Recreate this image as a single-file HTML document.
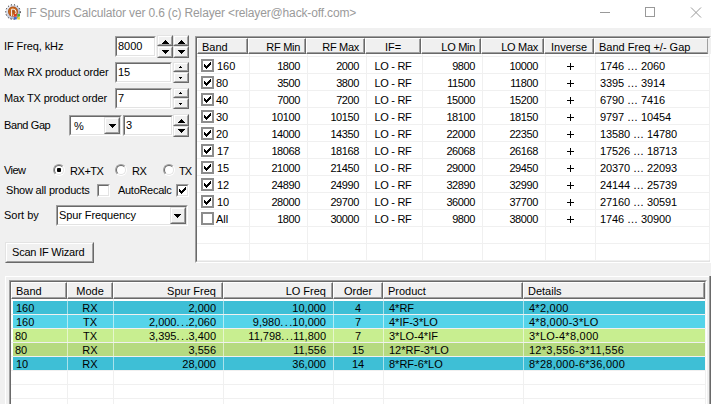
<!DOCTYPE html><html><head><meta charset="utf-8"><style>
*{box-sizing:border-box}
html{background:#f0f0f0}
body{margin:0;width:711px;height:404px;overflow:hidden;background:#f0f0f0;position:relative;font:11px "Liberation Sans",sans-serif;color:#000}
.a{position:absolute}
.t{position:absolute;line-height:13px;white-space:nowrap}
i{font-style:normal;letter-spacing:1.4px;margin-right:-1.4px}
.sk{border-style:solid;border-width:1px;border-color:#a0a0a0 #fff #fff #a0a0a0}
.ski{position:absolute;left:0;top:0;right:0;bottom:0;border-style:solid;border-width:1px;border-color:#696969 #e3e3e3 #e3e3e3 #696969}
.rs{border-style:solid;border-width:1px;border-color:#e3e3e3 #696969 #696969 #e3e3e3}
.rsi{position:absolute;left:0;top:0;right:0;bottom:0;border-style:solid;border-width:1px;border-color:#fff #a0a0a0 #a0a0a0 #fff}
.hd{position:absolute;background:#f0f0f0;border-style:solid;border-width:1px 1px 1px 1px;border-color:#fff #696969 #696969 #fff}
.hdi{position:absolute;left:0;top:0;right:0;bottom:0;border-style:solid;border-width:0 1px 1px 0;border-color:#a0a0a0}
</style></head><body>
<div class="a" style="left:0px;top:0px;width:711px;height:28px;background:#fff"></div>
<svg class="a" style="left:5px;top:4px" width="16" height="16" viewBox="0 0 16 16">
<defs><linearGradient id="rg" x1="0" y1="0" x2="1" y2="1"><stop offset="0" stop-color="#f4f6fa"/><stop offset="0.55" stop-color="#c4cadb"/><stop offset="1" stop-color="#8890a8"/></linearGradient>
<radialGradient id="og" cx="0.5" cy="0.5" r="0.55"><stop offset="0" stop-color="#a84810"/><stop offset="0.6" stop-color="#d07020"/><stop offset="1" stop-color="#9a4010"/></radialGradient></defs>
<circle cx="8" cy="8" r="7.3" fill="url(#rg)"/>
<circle cx="8" cy="8" r="7.3" fill="none" stroke="#111" stroke-width="1" stroke-dasharray="1.1 2.1"/>
<circle cx="8" cy="7.6" r="5" fill="url(#og)"/>
<path d="M6.6 12V5.2h1.6a2.9 3.1 0 0 1 0 6.2" stroke="#f4f4f4" stroke-width="1" fill="none"/>
<rect x="9" y="10" width="2.6" height="2.6" fill="#e03a20"/><rect x="12.3" y="10" width="2.6" height="2.6" fill="#48b038"/>
<rect x="9" y="13.1" width="2.6" height="2.4" fill="#3a68d0"/><rect x="12.3" y="13.1" width="2.6" height="2.4" fill="#e8d030"/>
</svg>
<div class="t" style="left:26px;top:5px;font-size:12px;line-height:16px;letter-spacing:-0.15px;color:#9a9a9a">IF Spurs Calculator ver 0.6 (c) Relayer &lt;relayer@hack-off.com&gt;</div>
<div class="a" style="left:600px;top:12px;width:10px;height:1px;background:#999"></div>
<div class="a" style="left:645px;top:7px;width:10px;height:10px;border:1px solid #999"></div>
<svg class="a" style="left:690px;top:7px" width="12" height="12"><path d="M1 0.5L11 10.5M11 0.5L1 10.5" stroke="#999" stroke-width="1"/></svg>
<div class="t" style="left:4px;top:40px;letter-spacing:-0.1px">IF Freq, kHz</div>
<div class="a sk" style="left:115px;top:36px;width:41px;height:21px;background:#fff"><div class="ski"></div></div>
<div class="t" style="left:118px;top:40px;">8000</div>
<div class="a rs" style="left:157px;top:35px;width:16px;height:11px;background:#f0f0f0"><div class="rsi"></div></div>
<div class="a rs" style="left:157px;top:46px;width:16px;height:12px;background:#f0f0f0"><div class="rsi"></div></div>
<div class="a" style="left:165px;top:40px;width:1px;height:1px;background:#000"></div><div class="a" style="left:164px;top:41px;width:3px;height:1px;background:#000"></div><div class="a" style="left:163px;top:42px;width:5px;height:1px;background:#000"></div><div class="a" style="left:162px;top:43px;width:7px;height:1px;background:#000"></div>
<div class="a" style="left:162px;top:50px;width:7px;height:1px;background:#000"></div><div class="a" style="left:163px;top:51px;width:5px;height:1px;background:#000"></div><div class="a" style="left:164px;top:52px;width:3px;height:1px;background:#000"></div><div class="a" style="left:165px;top:53px;width:1px;height:1px;background:#000"></div>
<div class="a rs" style="left:173px;top:35px;width:16px;height:11px;background:#f0f0f0"><div class="rsi"></div></div>
<div class="a rs" style="left:173px;top:46px;width:16px;height:12px;background:#f0f0f0"><div class="rsi"></div></div>
<div class="a" style="left:181px;top:40px;width:1px;height:1px;background:#000"></div><div class="a" style="left:180px;top:41px;width:3px;height:1px;background:#000"></div><div class="a" style="left:179px;top:42px;width:5px;height:1px;background:#000"></div><div class="a" style="left:178px;top:43px;width:7px;height:1px;background:#000"></div>
<div class="a" style="left:178px;top:50px;width:7px;height:1px;background:#000"></div><div class="a" style="left:179px;top:51px;width:5px;height:1px;background:#000"></div><div class="a" style="left:180px;top:52px;width:3px;height:1px;background:#000"></div><div class="a" style="left:181px;top:53px;width:1px;height:1px;background:#000"></div>
<div class="t" style="left:4px;top:66px;letter-spacing:-0.16px">Max RX product order</div>
<div class="a sk" style="left:115px;top:62px;width:57px;height:21px;background:#fff"><div class="ski"></div></div>
<div class="t" style="left:118px;top:66px;">15</div>
<div class="a rs" style="left:173px;top:62px;width:16px;height:10px;background:#f0f0f0"><div class="rsi"></div></div>
<div class="a rs" style="left:173px;top:72px;width:16px;height:11px;background:#f0f0f0"><div class="rsi"></div></div>
<div class="a" style="left:180px;top:66px;width:1px;height:1px;background:#000"></div><div class="a" style="left:179px;top:67px;width:3px;height:1px;background:#000"></div>
<div class="a" style="left:179px;top:77px;width:3px;height:1px;background:#000"></div><div class="a" style="left:180px;top:78px;width:1px;height:1px;background:#000"></div>
<div class="t" style="left:4px;top:92px;letter-spacing:-0.16px">Max TX product order</div>
<div class="a sk" style="left:115px;top:88px;width:57px;height:21px;background:#fff"><div class="ski"></div></div>
<div class="t" style="left:118px;top:92px;">7</div>
<div class="a rs" style="left:173px;top:88px;width:16px;height:10px;background:#f0f0f0"><div class="rsi"></div></div>
<div class="a rs" style="left:173px;top:98px;width:16px;height:11px;background:#f0f0f0"><div class="rsi"></div></div>
<div class="a" style="left:180px;top:92px;width:1px;height:1px;background:#000"></div><div class="a" style="left:179px;top:93px;width:3px;height:1px;background:#000"></div>
<div class="a" style="left:179px;top:103px;width:3px;height:1px;background:#000"></div><div class="a" style="left:180px;top:104px;width:1px;height:1px;background:#000"></div>
<div class="t" style="left:4px;top:119px;letter-spacing:-0.4px">Band Gap</div>
<div class="a sk" style="left:69px;top:115px;width:53px;height:21px;background:#fff"><div class="ski"></div></div>
<div class="t" style="left:74px;top:120px;">%</div>
<div class="a rs" style="left:104px;top:117px;width:16px;height:17px;background:#f0f0f0"><div class="rsi"></div></div>
<div class="a" style="left:109px;top:124px;width:7px;height:1px;background:#000"></div><div class="a" style="left:110px;top:125px;width:5px;height:1px;background:#000"></div><div class="a" style="left:111px;top:126px;width:3px;height:1px;background:#000"></div><div class="a" style="left:112px;top:127px;width:1px;height:1px;background:#000"></div>
<div class="a sk" style="left:123px;top:115px;width:50px;height:21px;background:#fff"><div class="ski"></div></div>
<div class="t" style="left:126px;top:119px;">3</div>
<div class="a rs" style="left:173px;top:114px;width:16px;height:12px;background:#f0f0f0"><div class="rsi"></div></div>
<div class="a rs" style="left:173px;top:126px;width:16px;height:11px;background:#f0f0f0"><div class="rsi"></div></div>
<div class="a" style="left:181px;top:119px;width:1px;height:1px;background:#000"></div><div class="a" style="left:180px;top:120px;width:3px;height:1px;background:#000"></div><div class="a" style="left:179px;top:121px;width:5px;height:1px;background:#000"></div><div class="a" style="left:178px;top:122px;width:7px;height:1px;background:#000"></div>
<div class="a" style="left:178px;top:129px;width:7px;height:1px;background:#000"></div><div class="a" style="left:179px;top:130px;width:5px;height:1px;background:#000"></div><div class="a" style="left:180px;top:131px;width:3px;height:1px;background:#000"></div><div class="a" style="left:181px;top:132px;width:1px;height:1px;background:#000"></div>
<div class="t" style="left:4px;top:164px;letter-spacing:-0.6px">View</div>
<div class="a" style="left:53px;top:164px;width:12px;height:12px;border-radius:50%;border:1px solid;border-color:#a0a0a0 #fff #fff #a0a0a0"><div class="a" style="left:0;top:0;width:10px;height:10px;border-radius:50%;border:1px solid;border-color:#696969 #e3e3e3 #e3e3e3 #696969;background:#fff"></div></div><div class="a" style="left:57px;top:168px;width:4px;height:4px;border-radius:1px;background:#000"></div>
<div class="t" style="left:70px;top:165px;letter-spacing:-0.45px">RX+TX</div>
<div class="a" style="left:115px;top:164px;width:12px;height:12px;border-radius:50%;border:1px solid;border-color:#a0a0a0 #fff #fff #a0a0a0"><div class="a" style="left:0;top:0;width:10px;height:10px;border-radius:50%;border:1px solid;border-color:#696969 #e3e3e3 #e3e3e3 #696969;background:#fff"></div></div>
<div class="t" style="left:132px;top:165px;letter-spacing:-0.5px">RX</div>
<div class="a" style="left:163px;top:164px;width:12px;height:12px;border-radius:50%;border:1px solid;border-color:#a0a0a0 #fff #fff #a0a0a0"><div class="a" style="left:0;top:0;width:10px;height:10px;border-radius:50%;border:1px solid;border-color:#696969 #e3e3e3 #e3e3e3 #696969;background:#fff"></div></div>
<div class="t" style="left:179px;top:165px;letter-spacing:-1px">TX</div>
<div class="t" style="left:6px;top:184px;letter-spacing:-0.19px">Show all products</div>
<div class="a sk" style="left:97px;top:184px;width:13px;height:13px;background:#fff"><div class="ski"></div></div>
<div class="t" style="left:118px;top:184px;letter-spacing:-0.29px">AutoRecalc</div>
<div class="a sk" style="left:176px;top:184px;width:13px;height:13px;background:#fff"><div class="ski"></div></div>
<svg class="a" style="left:179px;top:187px" width="7" height="7" shape-rendering="crispEdges"><path d="M6 0h1v1h-1zM5 1h1v1h-1zM6 1h1v1h-1zM0 2h1v1h-1zM4 2h1v1h-1zM5 2h1v1h-1zM6 2h1v1h-1zM0 3h1v1h-1zM1 3h1v1h-1zM3 3h1v1h-1zM4 3h1v1h-1zM5 3h1v1h-1zM0 4h1v1h-1zM1 4h1v1h-1zM2 4h1v1h-1zM3 4h1v1h-1zM4 4h1v1h-1zM1 5h1v1h-1zM2 5h1v1h-1zM3 5h1v1h-1zM2 6h1v1h-1z" fill="#000"/></svg>
<div class="t" style="left:4px;top:209px;">Sort by</div>
<div class="a sk" style="left:56px;top:205px;width:132px;height:21px;background:#fff"><div class="ski"></div></div>
<div class="t" style="left:59px;top:209px;letter-spacing:-0.1px">Spur Frequency</div>
<div class="a rs" style="left:170px;top:207px;width:16px;height:17px;background:#f0f0f0"><div class="rsi"></div></div>
<div class="a" style="left:174px;top:214px;width:7px;height:1px;background:#000"></div><div class="a" style="left:175px;top:215px;width:5px;height:1px;background:#000"></div><div class="a" style="left:176px;top:216px;width:3px;height:1px;background:#000"></div><div class="a" style="left:177px;top:217px;width:1px;height:1px;background:#000"></div>
<div class="a rs" style="left:5px;top:242px;width:89px;height:21px;background:#f0f0f0"><div class="rsi"></div></div>
<div class="t" style="left:12px;top:246px;letter-spacing:-0.2px">Scan IF Wizard</div>
<div class="a" style="left:195px;top:36px;width:516px;height:227px;background:#fff;border-style:solid;border-width:1px;border-color:#a0a0a0 #fff #fff #a0a0a0"></div>
<div class="a" style="left:196px;top:37px;width:514px;height:225px;border-style:solid;border-width:1px;border-color:#696969 #e3e3e3 #e3e3e3 #696969"></div>
<div class="a" style="left:249px;top:54px;width:1px;height:206px;background:#f0f0f0"></div>
<div class="a" style="left:307px;top:54px;width:1px;height:206px;background:#f0f0f0"></div>
<div class="a" style="left:366px;top:54px;width:1px;height:206px;background:#f0f0f0"></div>
<div class="a" style="left:422px;top:54px;width:1px;height:206px;background:#f0f0f0"></div>
<div class="a" style="left:482px;top:54px;width:1px;height:206px;background:#f0f0f0"></div>
<div class="a" style="left:545px;top:54px;width:1px;height:206px;background:#f0f0f0"></div>
<div class="a" style="left:595px;top:54px;width:1px;height:206px;background:#f0f0f0"></div>
<div class="a" style="left:709px;top:54px;width:1px;height:206px;background:#f0f0f0"></div>
<div class="a" style="left:197px;top:56px;width:512px;height:1px;background:#f0f0f0"></div>
<div class="a" style="left:197px;top:73px;width:512px;height:1px;background:#f0f0f0"></div>
<div class="a" style="left:197px;top:90px;width:512px;height:1px;background:#f0f0f0"></div>
<div class="a" style="left:197px;top:107px;width:512px;height:1px;background:#f0f0f0"></div>
<div class="a" style="left:197px;top:124px;width:512px;height:1px;background:#f0f0f0"></div>
<div class="a" style="left:197px;top:141px;width:512px;height:1px;background:#f0f0f0"></div>
<div class="a" style="left:197px;top:158px;width:512px;height:1px;background:#f0f0f0"></div>
<div class="a" style="left:197px;top:175px;width:512px;height:1px;background:#f0f0f0"></div>
<div class="a" style="left:197px;top:192px;width:512px;height:1px;background:#f0f0f0"></div>
<div class="a" style="left:197px;top:209px;width:512px;height:1px;background:#f0f0f0"></div>
<div class="a" style="left:197px;top:226px;width:512px;height:1px;background:#f0f0f0"></div>
<div class="a" style="left:197px;top:243px;width:512px;height:1px;background:#f0f0f0"></div>
<div class="a" style="left:197px;top:260px;width:512px;height:1px;background:#f0f0f0"></div>
<div class="a" style="left:197px;top:38px;width:514px;height:16px;background:#f0f0f0"></div>
<div class="hd" style="left:197px;top:38px;width:51px;height:16px"><div class="hdi"></div></div>
<div class="hd" style="left:248px;top:38px;width:58px;height:16px"><div class="hdi"></div></div>
<div class="hd" style="left:306px;top:38px;width:59px;height:16px"><div class="hdi"></div></div>
<div class="hd" style="left:365px;top:38px;width:56px;height:16px"><div class="hdi"></div></div>
<div class="hd" style="left:421px;top:38px;width:60px;height:16px"><div class="hdi"></div></div>
<div class="hd" style="left:481px;top:38px;width:63px;height:16px"><div class="hdi"></div></div>
<div class="hd" style="left:544px;top:38px;width:50px;height:16px"><div class="hdi"></div></div>
<div class="hd" style="left:594px;top:38px;width:114px;height:16px;border-right-color:#a0a0a0"><div class="hdi" style="border-right-width:0"></div></div>
<div class="t" style="left:202px;top:41px;">Band</div>
<div class="t" style="left:248px;width:52px;top:41px;text-align:right"><span style="letter-spacing:-0.3px">RF Min</span></div>
<div class="t" style="left:306px;width:53px;top:41px;text-align:right"><span style="letter-spacing:-0.3px">RF Max</span></div>
<div class="t" style="left:365px;width:56px;top:41px;text-align:center">IF=</div>
<div class="t" style="left:421px;width:54px;top:41px;text-align:right"><span style="letter-spacing:-0.3px">LO Min</span></div>
<div class="t" style="left:481px;width:57px;top:41px;text-align:right"><span style="letter-spacing:-0.3px">LO Max</span></div>
<div class="t" style="left:544px;width:50px;top:41px;text-align:center">Inverse</div>
<div class="t" style="left:599px;top:41px;">Band Freq +/- Gap</div>
<div class="a" style="left:201px;top:59px;width:13px;height:13px;border:2px solid #8c8c8c;background:#fff"></div>
<svg class="a" style="left:204px;top:62px" width="7" height="7" shape-rendering="crispEdges"><path d="M6 0h1v1h-1zM5 1h1v1h-1zM6 1h1v1h-1zM0 2h1v1h-1zM4 2h1v1h-1zM5 2h1v1h-1zM6 2h1v1h-1zM0 3h1v1h-1zM1 3h1v1h-1zM3 3h1v1h-1zM4 3h1v1h-1zM5 3h1v1h-1zM0 4h1v1h-1zM1 4h1v1h-1zM2 4h1v1h-1zM3 4h1v1h-1zM4 4h1v1h-1zM1 5h1v1h-1zM2 5h1v1h-1zM3 5h1v1h-1zM2 6h1v1h-1z" fill="#000"/></svg>
<div class="t" style="left:217px;top:60px;">160</div>
<div class="t" style="left:248px;width:52px;top:60px;text-align:right"><span style="letter-spacing:-0.4px">1800</span></div>
<div class="t" style="left:306px;width:53px;top:60px;text-align:right"><span style="letter-spacing:-0.4px">2000</span></div>
<div class="t" style="left:365px;width:56px;top:60px;text-align:center"><span style="letter-spacing:-0.3px">LO - RF</span></div>
<div class="t" style="left:421px;width:54px;top:60px;text-align:right"><span style="letter-spacing:-0.4px">9800</span></div>
<div class="t" style="left:481px;width:57px;top:60px;text-align:right"><span style="letter-spacing:-0.4px">10000</span></div>
<div class="a" style="left:567px;top:66px;width:7px;height:1px;background:#000"></div>
<div class="a" style="left:570px;top:63px;width:1px;height:7px;background:#000"></div>
<div class="t" style="left:600px;top:60px;"><span style="letter-spacing:-0.1px">1746 … 2060</span></div>
<div class="a" style="left:201px;top:76px;width:13px;height:13px;border:2px solid #8c8c8c;background:#fff"></div>
<svg class="a" style="left:204px;top:79px" width="7" height="7" shape-rendering="crispEdges"><path d="M6 0h1v1h-1zM5 1h1v1h-1zM6 1h1v1h-1zM0 2h1v1h-1zM4 2h1v1h-1zM5 2h1v1h-1zM6 2h1v1h-1zM0 3h1v1h-1zM1 3h1v1h-1zM3 3h1v1h-1zM4 3h1v1h-1zM5 3h1v1h-1zM0 4h1v1h-1zM1 4h1v1h-1zM2 4h1v1h-1zM3 4h1v1h-1zM4 4h1v1h-1zM1 5h1v1h-1zM2 5h1v1h-1zM3 5h1v1h-1zM2 6h1v1h-1z" fill="#000"/></svg>
<div class="t" style="left:216px;top:77px;">80</div>
<div class="t" style="left:248px;width:52px;top:77px;text-align:right"><span style="letter-spacing:-0.4px">3500</span></div>
<div class="t" style="left:306px;width:53px;top:77px;text-align:right"><span style="letter-spacing:-0.4px">3800</span></div>
<div class="t" style="left:365px;width:56px;top:77px;text-align:center"><span style="letter-spacing:-0.3px">LO - RF</span></div>
<div class="t" style="left:421px;width:54px;top:77px;text-align:right"><span style="letter-spacing:-0.4px">11500</span></div>
<div class="t" style="left:481px;width:57px;top:77px;text-align:right"><span style="letter-spacing:-0.4px">11800</span></div>
<div class="a" style="left:567px;top:83px;width:7px;height:1px;background:#000"></div>
<div class="a" style="left:570px;top:80px;width:1px;height:7px;background:#000"></div>
<div class="t" style="left:600px;top:77px;"><span style="letter-spacing:-0.1px">3395 … 3914</span></div>
<div class="a" style="left:201px;top:93px;width:13px;height:13px;border:2px solid #8c8c8c;background:#fff"></div>
<svg class="a" style="left:204px;top:96px" width="7" height="7" shape-rendering="crispEdges"><path d="M6 0h1v1h-1zM5 1h1v1h-1zM6 1h1v1h-1zM0 2h1v1h-1zM4 2h1v1h-1zM5 2h1v1h-1zM6 2h1v1h-1zM0 3h1v1h-1zM1 3h1v1h-1zM3 3h1v1h-1zM4 3h1v1h-1zM5 3h1v1h-1zM0 4h1v1h-1zM1 4h1v1h-1zM2 4h1v1h-1zM3 4h1v1h-1zM4 4h1v1h-1zM1 5h1v1h-1zM2 5h1v1h-1zM3 5h1v1h-1zM2 6h1v1h-1z" fill="#000"/></svg>
<div class="t" style="left:216px;top:94px;">40</div>
<div class="t" style="left:248px;width:52px;top:94px;text-align:right"><span style="letter-spacing:-0.4px">7000</span></div>
<div class="t" style="left:306px;width:53px;top:94px;text-align:right"><span style="letter-spacing:-0.4px">7200</span></div>
<div class="t" style="left:365px;width:56px;top:94px;text-align:center"><span style="letter-spacing:-0.3px">LO - RF</span></div>
<div class="t" style="left:421px;width:54px;top:94px;text-align:right"><span style="letter-spacing:-0.4px">15000</span></div>
<div class="t" style="left:481px;width:57px;top:94px;text-align:right"><span style="letter-spacing:-0.4px">15200</span></div>
<div class="a" style="left:567px;top:100px;width:7px;height:1px;background:#000"></div>
<div class="a" style="left:570px;top:97px;width:1px;height:7px;background:#000"></div>
<div class="t" style="left:600px;top:94px;"><span style="letter-spacing:-0.1px">6790 … 7416</span></div>
<div class="a" style="left:201px;top:110px;width:13px;height:13px;border:2px solid #8c8c8c;background:#fff"></div>
<svg class="a" style="left:204px;top:113px" width="7" height="7" shape-rendering="crispEdges"><path d="M6 0h1v1h-1zM5 1h1v1h-1zM6 1h1v1h-1zM0 2h1v1h-1zM4 2h1v1h-1zM5 2h1v1h-1zM6 2h1v1h-1zM0 3h1v1h-1zM1 3h1v1h-1zM3 3h1v1h-1zM4 3h1v1h-1zM5 3h1v1h-1zM0 4h1v1h-1zM1 4h1v1h-1zM2 4h1v1h-1zM3 4h1v1h-1zM4 4h1v1h-1zM1 5h1v1h-1zM2 5h1v1h-1zM3 5h1v1h-1zM2 6h1v1h-1z" fill="#000"/></svg>
<div class="t" style="left:216px;top:111px;">30</div>
<div class="t" style="left:248px;width:52px;top:111px;text-align:right"><span style="letter-spacing:-0.4px">10100</span></div>
<div class="t" style="left:306px;width:53px;top:111px;text-align:right"><span style="letter-spacing:-0.4px">10150</span></div>
<div class="t" style="left:365px;width:56px;top:111px;text-align:center"><span style="letter-spacing:-0.3px">LO - RF</span></div>
<div class="t" style="left:421px;width:54px;top:111px;text-align:right"><span style="letter-spacing:-0.4px">18100</span></div>
<div class="t" style="left:481px;width:57px;top:111px;text-align:right"><span style="letter-spacing:-0.4px">18150</span></div>
<div class="a" style="left:567px;top:117px;width:7px;height:1px;background:#000"></div>
<div class="a" style="left:570px;top:114px;width:1px;height:7px;background:#000"></div>
<div class="t" style="left:600px;top:111px;"><span style="letter-spacing:-0.1px">9797 … 10454</span></div>
<div class="a" style="left:201px;top:127px;width:13px;height:13px;border:2px solid #8c8c8c;background:#fff"></div>
<svg class="a" style="left:204px;top:130px" width="7" height="7" shape-rendering="crispEdges"><path d="M6 0h1v1h-1zM5 1h1v1h-1zM6 1h1v1h-1zM0 2h1v1h-1zM4 2h1v1h-1zM5 2h1v1h-1zM6 2h1v1h-1zM0 3h1v1h-1zM1 3h1v1h-1zM3 3h1v1h-1zM4 3h1v1h-1zM5 3h1v1h-1zM0 4h1v1h-1zM1 4h1v1h-1zM2 4h1v1h-1zM3 4h1v1h-1zM4 4h1v1h-1zM1 5h1v1h-1zM2 5h1v1h-1zM3 5h1v1h-1zM2 6h1v1h-1z" fill="#000"/></svg>
<div class="t" style="left:216px;top:128px;">20</div>
<div class="t" style="left:248px;width:52px;top:128px;text-align:right"><span style="letter-spacing:-0.4px">14000</span></div>
<div class="t" style="left:306px;width:53px;top:128px;text-align:right"><span style="letter-spacing:-0.4px">14350</span></div>
<div class="t" style="left:365px;width:56px;top:128px;text-align:center"><span style="letter-spacing:-0.3px">LO - RF</span></div>
<div class="t" style="left:421px;width:54px;top:128px;text-align:right"><span style="letter-spacing:-0.4px">22000</span></div>
<div class="t" style="left:481px;width:57px;top:128px;text-align:right"><span style="letter-spacing:-0.4px">22350</span></div>
<div class="a" style="left:567px;top:134px;width:7px;height:1px;background:#000"></div>
<div class="a" style="left:570px;top:131px;width:1px;height:7px;background:#000"></div>
<div class="t" style="left:600px;top:128px;"><span style="letter-spacing:-0.1px">13580 … 14780</span></div>
<div class="a" style="left:201px;top:144px;width:13px;height:13px;border:2px solid #8c8c8c;background:#fff"></div>
<svg class="a" style="left:204px;top:147px" width="7" height="7" shape-rendering="crispEdges"><path d="M6 0h1v1h-1zM5 1h1v1h-1zM6 1h1v1h-1zM0 2h1v1h-1zM4 2h1v1h-1zM5 2h1v1h-1zM6 2h1v1h-1zM0 3h1v1h-1zM1 3h1v1h-1zM3 3h1v1h-1zM4 3h1v1h-1zM5 3h1v1h-1zM0 4h1v1h-1zM1 4h1v1h-1zM2 4h1v1h-1zM3 4h1v1h-1zM4 4h1v1h-1zM1 5h1v1h-1zM2 5h1v1h-1zM3 5h1v1h-1zM2 6h1v1h-1z" fill="#000"/></svg>
<div class="t" style="left:217px;top:145px;">17</div>
<div class="t" style="left:248px;width:52px;top:145px;text-align:right"><span style="letter-spacing:-0.4px">18068</span></div>
<div class="t" style="left:306px;width:53px;top:145px;text-align:right"><span style="letter-spacing:-0.4px">18168</span></div>
<div class="t" style="left:365px;width:56px;top:145px;text-align:center"><span style="letter-spacing:-0.3px">LO - RF</span></div>
<div class="t" style="left:421px;width:54px;top:145px;text-align:right"><span style="letter-spacing:-0.4px">26068</span></div>
<div class="t" style="left:481px;width:57px;top:145px;text-align:right"><span style="letter-spacing:-0.4px">26168</span></div>
<div class="a" style="left:567px;top:151px;width:7px;height:1px;background:#000"></div>
<div class="a" style="left:570px;top:148px;width:1px;height:7px;background:#000"></div>
<div class="t" style="left:600px;top:145px;"><span style="letter-spacing:-0.1px">17526 … 18713</span></div>
<div class="a" style="left:201px;top:161px;width:13px;height:13px;border:2px solid #8c8c8c;background:#fff"></div>
<svg class="a" style="left:204px;top:164px" width="7" height="7" shape-rendering="crispEdges"><path d="M6 0h1v1h-1zM5 1h1v1h-1zM6 1h1v1h-1zM0 2h1v1h-1zM4 2h1v1h-1zM5 2h1v1h-1zM6 2h1v1h-1zM0 3h1v1h-1zM1 3h1v1h-1zM3 3h1v1h-1zM4 3h1v1h-1zM5 3h1v1h-1zM0 4h1v1h-1zM1 4h1v1h-1zM2 4h1v1h-1zM3 4h1v1h-1zM4 4h1v1h-1zM1 5h1v1h-1zM2 5h1v1h-1zM3 5h1v1h-1zM2 6h1v1h-1z" fill="#000"/></svg>
<div class="t" style="left:217px;top:162px;">15</div>
<div class="t" style="left:248px;width:52px;top:162px;text-align:right"><span style="letter-spacing:-0.4px">21000</span></div>
<div class="t" style="left:306px;width:53px;top:162px;text-align:right"><span style="letter-spacing:-0.4px">21450</span></div>
<div class="t" style="left:365px;width:56px;top:162px;text-align:center"><span style="letter-spacing:-0.3px">LO - RF</span></div>
<div class="t" style="left:421px;width:54px;top:162px;text-align:right"><span style="letter-spacing:-0.4px">29000</span></div>
<div class="t" style="left:481px;width:57px;top:162px;text-align:right"><span style="letter-spacing:-0.4px">29450</span></div>
<div class="a" style="left:567px;top:168px;width:7px;height:1px;background:#000"></div>
<div class="a" style="left:570px;top:165px;width:1px;height:7px;background:#000"></div>
<div class="t" style="left:600px;top:162px;"><span style="letter-spacing:-0.1px">20370 … 22093</span></div>
<div class="a" style="left:201px;top:178px;width:13px;height:13px;border:2px solid #8c8c8c;background:#fff"></div>
<svg class="a" style="left:204px;top:181px" width="7" height="7" shape-rendering="crispEdges"><path d="M6 0h1v1h-1zM5 1h1v1h-1zM6 1h1v1h-1zM0 2h1v1h-1zM4 2h1v1h-1zM5 2h1v1h-1zM6 2h1v1h-1zM0 3h1v1h-1zM1 3h1v1h-1zM3 3h1v1h-1zM4 3h1v1h-1zM5 3h1v1h-1zM0 4h1v1h-1zM1 4h1v1h-1zM2 4h1v1h-1zM3 4h1v1h-1zM4 4h1v1h-1zM1 5h1v1h-1zM2 5h1v1h-1zM3 5h1v1h-1zM2 6h1v1h-1z" fill="#000"/></svg>
<div class="t" style="left:217px;top:179px;">12</div>
<div class="t" style="left:248px;width:52px;top:179px;text-align:right"><span style="letter-spacing:-0.4px">24890</span></div>
<div class="t" style="left:306px;width:53px;top:179px;text-align:right"><span style="letter-spacing:-0.4px">24990</span></div>
<div class="t" style="left:365px;width:56px;top:179px;text-align:center"><span style="letter-spacing:-0.3px">LO - RF</span></div>
<div class="t" style="left:421px;width:54px;top:179px;text-align:right"><span style="letter-spacing:-0.4px">32890</span></div>
<div class="t" style="left:481px;width:57px;top:179px;text-align:right"><span style="letter-spacing:-0.4px">32990</span></div>
<div class="a" style="left:567px;top:185px;width:7px;height:1px;background:#000"></div>
<div class="a" style="left:570px;top:182px;width:1px;height:7px;background:#000"></div>
<div class="t" style="left:600px;top:179px;"><span style="letter-spacing:-0.1px">24144 … 25739</span></div>
<div class="a" style="left:201px;top:195px;width:13px;height:13px;border:2px solid #8c8c8c;background:#fff"></div>
<svg class="a" style="left:204px;top:198px" width="7" height="7" shape-rendering="crispEdges"><path d="M6 0h1v1h-1zM5 1h1v1h-1zM6 1h1v1h-1zM0 2h1v1h-1zM4 2h1v1h-1zM5 2h1v1h-1zM6 2h1v1h-1zM0 3h1v1h-1zM1 3h1v1h-1zM3 3h1v1h-1zM4 3h1v1h-1zM5 3h1v1h-1zM0 4h1v1h-1zM1 4h1v1h-1zM2 4h1v1h-1zM3 4h1v1h-1zM4 4h1v1h-1zM1 5h1v1h-1zM2 5h1v1h-1zM3 5h1v1h-1zM2 6h1v1h-1z" fill="#000"/></svg>
<div class="t" style="left:217px;top:196px;">10</div>
<div class="t" style="left:248px;width:52px;top:196px;text-align:right"><span style="letter-spacing:-0.4px">28000</span></div>
<div class="t" style="left:306px;width:53px;top:196px;text-align:right"><span style="letter-spacing:-0.4px">29700</span></div>
<div class="t" style="left:365px;width:56px;top:196px;text-align:center"><span style="letter-spacing:-0.3px">LO - RF</span></div>
<div class="t" style="left:421px;width:54px;top:196px;text-align:right"><span style="letter-spacing:-0.4px">36000</span></div>
<div class="t" style="left:481px;width:57px;top:196px;text-align:right"><span style="letter-spacing:-0.4px">37700</span></div>
<div class="a" style="left:567px;top:202px;width:7px;height:1px;background:#000"></div>
<div class="a" style="left:570px;top:199px;width:1px;height:7px;background:#000"></div>
<div class="t" style="left:600px;top:196px;"><span style="letter-spacing:-0.1px">27160 … 30591</span></div>
<div class="a" style="left:201px;top:212px;width:13px;height:13px;border:2px solid #8c8c8c;background:#fff"></div>
<div class="t" style="left:216px;top:213px;">All</div>
<div class="t" style="left:248px;width:52px;top:213px;text-align:right"><span style="letter-spacing:-0.4px">1800</span></div>
<div class="t" style="left:306px;width:53px;top:213px;text-align:right"><span style="letter-spacing:-0.4px">30000</span></div>
<div class="t" style="left:365px;width:56px;top:213px;text-align:center"><span style="letter-spacing:-0.3px">LO - RF</span></div>
<div class="t" style="left:421px;width:54px;top:213px;text-align:right"><span style="letter-spacing:-0.4px">9800</span></div>
<div class="t" style="left:481px;width:57px;top:213px;text-align:right"><span style="letter-spacing:-0.4px">38000</span></div>
<div class="a" style="left:567px;top:219px;width:7px;height:1px;background:#000"></div>
<div class="a" style="left:570px;top:216px;width:1px;height:7px;background:#000"></div>
<div class="t" style="left:600px;top:213px;"><span style="letter-spacing:-0.1px">1746 … 30900</span></div>
<div class="a" style="left:5px;top:276px;width:706px;height:128px;border-style:solid;border-width:1px 0 0 1px;border-color:#fff"></div>
<div class="a" style="left:9px;top:280px;width:698px;height:130px;background:#fff;border-style:solid;border-width:1px;border-color:#a0a0a0 #fff #fff #a0a0a0"></div>
<div class="a" style="left:10px;top:281px;width:696px;height:128px;border-style:solid;border-width:1px;border-color:#696969 #e3e3e3 #e3e3e3 #696969"></div>
<div class="a" style="left:11px;top:314px;width:695px;height:1px;background:#f0f0f0"></div>
<div class="a" style="left:11px;top:328px;width:695px;height:1px;background:#f0f0f0"></div>
<div class="a" style="left:11px;top:342px;width:695px;height:1px;background:#f0f0f0"></div>
<div class="a" style="left:11px;top:356px;width:695px;height:1px;background:#f0f0f0"></div>
<div class="a" style="left:11px;top:370px;width:695px;height:1px;background:#f0f0f0"></div>
<div class="a" style="left:11px;top:384px;width:695px;height:1px;background:#f0f0f0"></div>
<div class="a" style="left:11px;top:398px;width:695px;height:1px;background:#f0f0f0"></div>
<div class="a" style="left:67px;top:299px;width:1px;height:105px;background:#f0f0f0"></div>
<div class="a" style="left:113px;top:299px;width:1px;height:105px;background:#f0f0f0"></div>
<div class="a" style="left:223px;top:299px;width:1px;height:105px;background:#f0f0f0"></div>
<div class="a" style="left:333px;top:299px;width:1px;height:105px;background:#f0f0f0"></div>
<div class="a" style="left:383px;top:299px;width:1px;height:105px;background:#f0f0f0"></div>
<div class="a" style="left:523px;top:299px;width:1px;height:105px;background:#f0f0f0"></div>
<div class="a" style="left:705px;top:299px;width:1px;height:105px;background:#f0f0f0"></div>
<div class="a" style="left:13px;top:301px;width:692px;height:13px;background:#3ebfd6"></div>
<div class="a" style="left:67px;top:301px;width:1px;height:13px;background:rgba(255,255,255,0.55)"></div>
<div class="a" style="left:113px;top:301px;width:1px;height:13px;background:rgba(255,255,255,0.55)"></div>
<div class="a" style="left:223px;top:301px;width:1px;height:13px;background:rgba(255,255,255,0.55)"></div>
<div class="a" style="left:333px;top:301px;width:1px;height:13px;background:rgba(255,255,255,0.55)"></div>
<div class="a" style="left:383px;top:301px;width:1px;height:13px;background:rgba(255,255,255,0.55)"></div>
<div class="a" style="left:523px;top:301px;width:1px;height:13px;background:rgba(255,255,255,0.55)"></div>
<div class="a" style="left:705px;top:301px;width:1px;height:13px;background:rgba(255,255,255,0.55)"></div>
<div class="t" style="left:16px;top:302px;">160</div>
<div class="t" style="left:67px;width:46px;top:302px;text-align:center">RX</div>
<div class="t" style="left:113px;width:103px;top:302px;text-align:right">2,000</div>
<div class="t" style="left:223px;width:103px;top:302px;text-align:right">10,000</div>
<div class="t" style="left:333px;width:50px;top:302px;text-align:center">4</div>
<div class="t" style="left:389px;top:302px;">4*RF</div>
<div class="t" style="left:529px;top:302px;"><span style="letter-spacing:0.25px">4*2,000</span></div>
<div class="a" style="left:13px;top:315px;width:692px;height:13px;background:#55d4ea"></div>
<div class="a" style="left:67px;top:315px;width:1px;height:13px;background:rgba(255,255,255,0.55)"></div>
<div class="a" style="left:113px;top:315px;width:1px;height:13px;background:rgba(255,255,255,0.55)"></div>
<div class="a" style="left:223px;top:315px;width:1px;height:13px;background:rgba(255,255,255,0.55)"></div>
<div class="a" style="left:333px;top:315px;width:1px;height:13px;background:rgba(255,255,255,0.55)"></div>
<div class="a" style="left:383px;top:315px;width:1px;height:13px;background:rgba(255,255,255,0.55)"></div>
<div class="a" style="left:523px;top:315px;width:1px;height:13px;background:rgba(255,255,255,0.55)"></div>
<div class="a" style="left:705px;top:315px;width:1px;height:13px;background:rgba(255,255,255,0.55)"></div>
<div class="t" style="left:16px;top:316px;">160</div>
<div class="t" style="left:67px;width:46px;top:316px;text-align:center">TX</div>
<div class="t" style="left:113px;width:103px;top:316px;text-align:right">2,000<i>...</i>2,060</div>
<div class="t" style="left:223px;width:103px;top:316px;text-align:right">9,980<i>...</i>10,000</div>
<div class="t" style="left:333px;width:50px;top:316px;text-align:center">7</div>
<div class="t" style="left:389px;top:316px;">4*IF-3*LO</div>
<div class="t" style="left:529px;top:316px;"><span style="letter-spacing:0.25px">4*8,000-3*LO</span></div>
<div class="a" style="left:13px;top:329px;width:692px;height:13px;background:#c8ee90"></div>
<div class="a" style="left:67px;top:329px;width:1px;height:13px;background:rgba(255,255,255,0.55)"></div>
<div class="a" style="left:113px;top:329px;width:1px;height:13px;background:rgba(255,255,255,0.55)"></div>
<div class="a" style="left:223px;top:329px;width:1px;height:13px;background:rgba(255,255,255,0.55)"></div>
<div class="a" style="left:333px;top:329px;width:1px;height:13px;background:rgba(255,255,255,0.55)"></div>
<div class="a" style="left:383px;top:329px;width:1px;height:13px;background:rgba(255,255,255,0.55)"></div>
<div class="a" style="left:523px;top:329px;width:1px;height:13px;background:rgba(255,255,255,0.55)"></div>
<div class="a" style="left:705px;top:329px;width:1px;height:13px;background:rgba(255,255,255,0.55)"></div>
<div class="t" style="left:15px;top:330px;">80</div>
<div class="t" style="left:67px;width:46px;top:330px;text-align:center">TX</div>
<div class="t" style="left:113px;width:103px;top:330px;text-align:right">3,395<i>...</i>3,400</div>
<div class="t" style="left:223px;width:103px;top:330px;text-align:right">11,798<i>...</i>11,800</div>
<div class="t" style="left:333px;width:50px;top:330px;text-align:center">7</div>
<div class="t" style="left:389px;top:330px;">3*LO-4*IF</div>
<div class="t" style="left:529px;top:330px;"><span style="letter-spacing:0.25px">3*LO-4*8,000</span></div>
<div class="a" style="left:13px;top:343px;width:692px;height:13px;background:#b6da80"></div>
<div class="a" style="left:67px;top:343px;width:1px;height:13px;background:rgba(255,255,255,0.55)"></div>
<div class="a" style="left:113px;top:343px;width:1px;height:13px;background:rgba(255,255,255,0.55)"></div>
<div class="a" style="left:223px;top:343px;width:1px;height:13px;background:rgba(255,255,255,0.55)"></div>
<div class="a" style="left:333px;top:343px;width:1px;height:13px;background:rgba(255,255,255,0.55)"></div>
<div class="a" style="left:383px;top:343px;width:1px;height:13px;background:rgba(255,255,255,0.55)"></div>
<div class="a" style="left:523px;top:343px;width:1px;height:13px;background:rgba(255,255,255,0.55)"></div>
<div class="a" style="left:705px;top:343px;width:1px;height:13px;background:rgba(255,255,255,0.55)"></div>
<div class="t" style="left:15px;top:344px;">80</div>
<div class="t" style="left:67px;width:46px;top:344px;text-align:center">RX</div>
<div class="t" style="left:113px;width:103px;top:344px;text-align:right">3,556</div>
<div class="t" style="left:223px;width:103px;top:344px;text-align:right">11,556</div>
<div class="t" style="left:333px;width:50px;top:344px;text-align:center">15</div>
<div class="t" style="left:389px;top:344px;">12*RF-3*LO</div>
<div class="t" style="left:529px;top:344px;"><span style="letter-spacing:0.25px">12*3,556-3*11,556</span></div>
<div class="a" style="left:13px;top:357px;width:692px;height:13px;background:#3ebfd6"></div>
<div class="a" style="left:67px;top:357px;width:1px;height:13px;background:rgba(255,255,255,0.55)"></div>
<div class="a" style="left:113px;top:357px;width:1px;height:13px;background:rgba(255,255,255,0.55)"></div>
<div class="a" style="left:223px;top:357px;width:1px;height:13px;background:rgba(255,255,255,0.55)"></div>
<div class="a" style="left:333px;top:357px;width:1px;height:13px;background:rgba(255,255,255,0.55)"></div>
<div class="a" style="left:383px;top:357px;width:1px;height:13px;background:rgba(255,255,255,0.55)"></div>
<div class="a" style="left:523px;top:357px;width:1px;height:13px;background:rgba(255,255,255,0.55)"></div>
<div class="a" style="left:705px;top:357px;width:1px;height:13px;background:rgba(255,255,255,0.55)"></div>
<div class="t" style="left:16px;top:358px;">10</div>
<div class="t" style="left:67px;width:46px;top:358px;text-align:center">RX</div>
<div class="t" style="left:113px;width:103px;top:358px;text-align:right">28,000</div>
<div class="t" style="left:223px;width:103px;top:358px;text-align:right">36,000</div>
<div class="t" style="left:333px;width:50px;top:358px;text-align:center">14</div>
<div class="t" style="left:389px;top:358px;">8*RF-6*LO</div>
<div class="t" style="left:529px;top:358px;"><span style="letter-spacing:0.25px">8*28,000-6*36,000</span></div>
<div class="hd" style="left:11px;top:282px;width:56px;height:17px"><div class="hdi"></div></div>
<div class="t" style="left:16px;top:285px;">Band</div>
<div class="hd" style="left:67px;top:282px;width:46px;height:17px"><div class="hdi"></div></div>
<div class="t" style="left:67px;width:46px;top:285px;text-align:center">Mode</div>
<div class="hd" style="left:113px;top:282px;width:110px;height:17px"><div class="hdi"></div></div>
<div class="t" style="left:113px;width:103px;top:285px;text-align:right">Spur Freq</div>
<div class="hd" style="left:223px;top:282px;width:110px;height:17px"><div class="hdi"></div></div>
<div class="t" style="left:223px;width:103px;top:285px;text-align:right">LO Freq</div>
<div class="hd" style="left:333px;top:282px;width:50px;height:17px"><div class="hdi"></div></div>
<div class="t" style="left:333px;width:50px;top:285px;text-align:center">Order</div>
<div class="hd" style="left:383px;top:282px;width:140px;height:17px"><div class="hdi"></div></div>
<div class="t" style="left:388px;top:285px;">Product</div>
<div class="hd" style="left:523px;top:282px;width:182px;height:17px"><div class="hdi"></div></div>
<div class="t" style="left:528px;top:285px;">Details</div>
<div class="a" style="left:709px;top:276px;width:1px;height:128px;background:#a0a0a0"></div>
<div class="a" style="left:710px;top:276px;width:1px;height:128px;background:#696969"></div>
</body></html>
